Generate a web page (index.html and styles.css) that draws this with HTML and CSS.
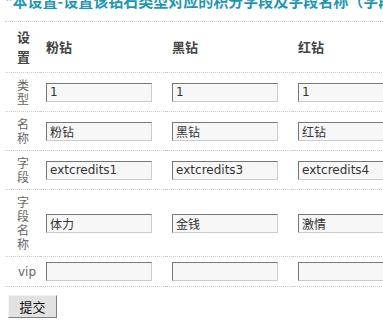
FILE: index.html
```html
<!DOCTYPE html>
<html>
  <head>
    <meta charset="utf-8">
    <title>钻石设置</title>
    <link rel="stylesheet" href="styles.css">
  </head>
  <body>
    <div class="wrap">
      <p class="notice">*本设置-设置该钻石类型对应的积分字段及字段名称（字段用户的积分设置）</p>
      <form>
        <table class="setting">
          <tr>
            <th class="label">设置</th>
            <th>粉钻</th>
            <th>黑钻</th>
            <th>红钻</th>
          </tr>
          <tr>
            <td class="label">类型</td>
            <td><input type="text" value="1"></td>
            <td><input type="text" value="1"></td>
            <td><input type="text" value="1"></td>
          </tr>
          <tr>
            <td class="label">名称</td>
            <td><input type="text" value="粉钻"></td>
            <td><input type="text" value="黑钻"></td>
            <td><input type="text" value="红钻"></td>
          </tr>
          <tr>
            <td class="label">字段</td>
            <td><input type="text" value="extcredits1"></td>
            <td><input type="text" value="extcredits3"></td>
            <td><input type="text" value="extcredits4"></td>
          </tr>
          <tr>
            <td class="label">字段名称</td>
            <td><input type="text" value="体力"></td>
            <td><input type="text" value="金钱"></td>
            <td><input type="text" value="激情"></td>
          </tr>
          <tr>
            <td class="label latin">vip</td>
            <td><input type="text" value=""></td>
            <td><input type="text" value=""></td>
            <td><input type="text" value=""></td>
          </tr>
        </table>
        <div class="actions">
          <button type="button">提交</button>
        </div>
      </form>
    </div>
  </body>
</html>
```

FILE: styles.css
```css
/* 基础 */
html, body {
  margin: 0;
  padding: 0;
  overflow: hidden;
  background: #fff;
}

body {
  font-family: "DejaVu Sans", "Noto Sans CJK SC", sans-serif;
  font-size: 12px;
  color: #555;
}

.wrap {
  padding: 0 0 0 5px;
  width: 600px;
}

/* 顶部说明 */
.notice {
  margin: -9px 0 0;
  padding: 0 0 11px;
  line-height: 19px;
  font-size: 15px;
  font-weight: bold;
  color: #1f96b4;
  white-space: nowrap;
  font-family: "Noto Sans CJK SC", sans-serif;
  border-bottom: 1px dotted #ccc;
}

/* 设置表格 */
.setting {
  border-collapse: collapse;
}

.setting th,
.setting td {
  padding: 5px 14px 5px 6px;
  border-bottom: 1px dotted #ccc;
  vertical-align: middle;
  text-align: left;
}

.setting th {
  width: 106px;
  font-family: "Noto Sans CJK SC", sans-serif;
  font-size: 13px;
  line-height: 20px;
  font-weight: bold;
  color: #444;
}

.setting .label {
  width: 18px;
  padding: 5px 5px 5px 12px;
  font-family: "Noto Sans CJK SC", sans-serif;
  font-size: 12px;
  line-height: 14px;
  color: #666;
}

.setting th.label {
  font-size: 13px;
  line-height: 20px;
  color: #444;
}

.setting .label.latin {
  padding-left: 13px;
  padding-right: 4px;
  font-family: "DejaVu Sans", sans-serif;
  font-size: 12px;
}

input[type="text"] {
  box-sizing: border-box;
  display: block;
  width: 106px;
  height: 19px;
  margin: 0;
  padding: 0 3px;
  border: 1px solid;
  border-color: #777 #ccc #ccc #777;
  background: #f7f7f7;
  font-family: "DejaVu Sans", "Noto Sans CJK SC", sans-serif;
  font-size: 12px;
  color: #333;
}

/* 提交按钮 */
.actions {
  padding: 8px 0 0 3px;
}

button {
  width: 49px;
  height: 23px;
  padding: 0;
  border: 1px solid;
  border-color: #f4f4f4 #808080 #808080 #f4f4f4;
  background: #e2e2e2;
  font-family: "Noto Sans CJK SC", sans-serif;
  font-size: 13px;
  color: #111;
}
```
